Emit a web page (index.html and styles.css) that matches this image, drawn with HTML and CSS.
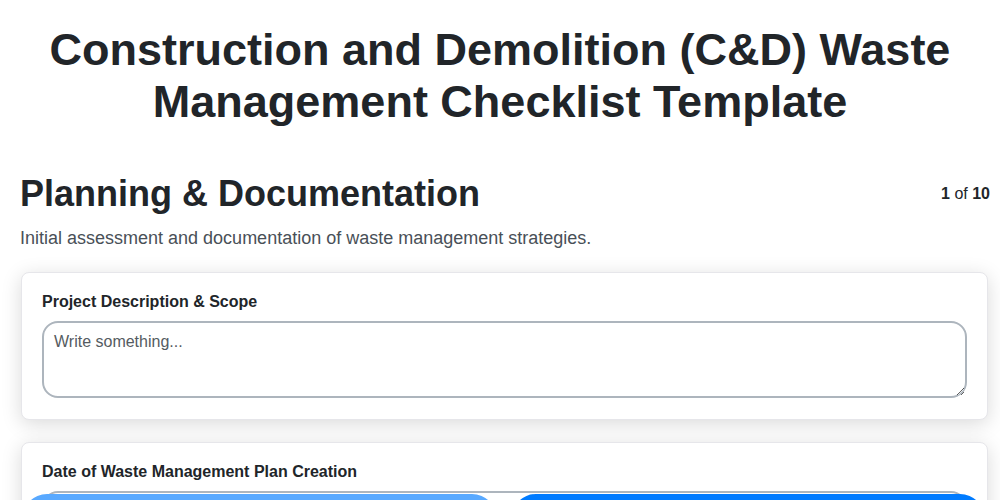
FILE: index.html
```html
<!DOCTYPE html>
<html lang="en">
<head>
<meta charset="utf-8">
<title>C&amp;D Waste Management Checklist</title>
<link rel="stylesheet" href="styles.css">
</head>
<body>
<header class="page-header">
  <h1 class="page-title">Construction and Demolition (C&amp;D) Waste Management Checklist Template</h1>
</header>
<main class="container">
  <div class="section-head">
    <h2 class="section-title">Planning &amp; Documentation</h2>
    <div class="pager"><b>1</b> of <b>10</b></div>
  </div>
  <p class="section-desc">Initial assessment and documentation of waste management strategies.</p>

  <div class="card">
    <label class="field-label" for="desc">Project Description &amp; Scope</label>
    <textarea id="desc" class="field-textarea" placeholder="Write something..."></textarea>
  </div>

  <div class="card">
    <label class="field-label" for="date">Date of Waste Management Plan Creation</label>
    <input id="date" class="field-input" type="text">
  </div>
</main>
<nav class="bottom-bar">
  <button class="btn btn-prev" type="button">Previous</button>
  <button class="btn btn-next" type="button">Next</button>
</nav>
</body>
</html>
```
FILE: styles.css
```css
* { box-sizing: border-box; }
html, body { margin: 0; padding: 0; background: #fff; }
body {
  font-family: "Liberation Sans", Arial, sans-serif;
  color: #212529;
}
.page-header {
  padding: 24px 20px 0;
}
.page-title {
  margin: 0;
  text-align: center;
  font-size: 45px;
  line-height: 52px;
  font-weight: 700;
}
.container {
  padding: 44px 10px 80px 20px;
}
.section-head {
  display: flex;
  align-items: center;
  justify-content: space-between;
}
.section-title {
  margin: 0;
  font-size: 36px;
  line-height: 44px;
  font-weight: 700;
}
.pager {
  font-size: 16px;
}
.section-desc {
  margin: 12px 0 24px;
  font-size: 18px;
  line-height: 20px;
  color: #495057;
}
.card {
  margin: 0 2px 22px 1px;
  padding: 19px 20px 21px;
  background: #fff;
  border: 1px solid #e6e6ea;
  border-radius: 8px;
  box-shadow: 0 4px 20px rgba(0, 0, 0, 0.15);
}
.field-label {
  display: block;
  font-size: 16px;
  line-height: 19px;
  font-weight: 700;
  margin-bottom: 10px;
}
.field-textarea, .field-input {
  display: block;
  width: 100%;
  font-family: "Liberation Sans", Arial, sans-serif;
  font-size: 16px;
  color: #212529;
  border: 2px solid #adb5bd;
  border-radius: 16px;
  padding: 10px;
  background: #fff;
}
.field-textarea {
  height: 77px;
  resize: vertical;
}
.field-textarea::placeholder { color: #555b61; }
.field-input { height: 44px; }
.bottom-bar {
  position: fixed;
  left: 22px;
  right: 15px;
  bottom: -44px;
  display: flex;
  gap: 14px;
}
.btn {
  flex: 1;
  height: 50px;
  border: none;
  border-radius: 25px;
  font-family: "Liberation Sans", Arial, sans-serif;
  font-size: 16px;
  color: #fff;
}
.btn-prev { background: #59a9ff; }
.btn-next { background: #007bff; }
```
